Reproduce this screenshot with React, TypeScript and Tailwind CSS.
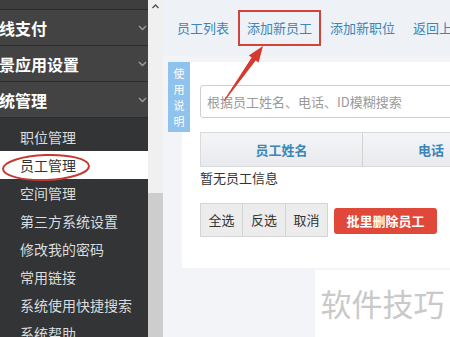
const TOP_MENU = ["线支付", "景应用设置", "统管理"];

const SUB_MENU = [
  "职位管理",
  "员工管理",
  "空间管理",
  "第三方系统设置",
  "修改我的密码",
  "常用链接",
  "系统使用快捷搜索",
  "系统帮助",
];

const TABS = ["员工列表", "添加新员工", "添加新职位", "返回上一页"];

const FONT = "font-['Microsoft_YaHei','Noto_Sans_CJK_SC',sans-serif]";

function Chevron() {
  return (
    <svg width="9" height="6" viewBox="0 0 9 6" className="shrink-0">
      <path d="M1 1 L4.5 4.5 L8 1" fill="none" stroke="#9a9a9a" strokeWidth="1.5" />
    </svg>
  );
}

function Sidebar() {
  return (
    <aside className="flex h-[337px] w-[148px] shrink-0 flex-col overflow-hidden bg-[#323436]">
      <div className="h-[10px] shrink-0 border-b border-[#2c2c2c] bg-[#3e3e3e]" />
      {TOP_MENU.map((label) => (
        <div
          key={label}
          className="flex h-[36px] shrink-0 items-center justify-between border-b border-[#2c2c2c] bg-[#434343] pr-[1px]"
        >
          <span className="-ml-[1px] text-[16px] font-bold leading-none text-white">
            {label}
          </span>
          <Chevron />
        </div>
      ))}
      <div className="flex shrink-0 flex-col pt-[5px]">
        {SUB_MENU.map((label) => {
          const active = label === "员工管理";
          return (
            <div
              key={label}
              className={
                active
                  ? "flex h-[28px] shrink-0 items-center bg-white pl-[20px] text-[14px] text-[#333]"
                  : "flex h-[28px] shrink-0 items-center pl-[20px] text-[14px] text-[#dcdcdc]"
              }
            >
              {label}
            </div>
          );
        })}
      </div>
    </aside>
  );
}

function Scrollbar() {
  return (
    <div className="flex w-[15px] shrink-0 flex-col bg-[#f0f0f0]">
      <div className="flex h-[12px] shrink-0 items-center justify-center">
        <svg width="7" height="5" viewBox="0 0 7 5">
          <path d="M0.5 4 L3.5 1 L6.5 4" fill="none" stroke="#505050" strokeWidth="1.4" />
        </svg>
      </div>
      <div className="flex-1" />
      <div className="h-[144px] shrink-0 bg-[#cdcdcd]" />
    </div>
  );
}

function Content() {
  return (
    <main className="relative flex min-w-0 flex-1 flex-col bg-[#f2f4f7]">
      {/* tabs */}
      <nav className="flex h-[56px] shrink-0 items-start overflow-hidden bg-[#eef1f5] pl-[5px] pt-[10px]">
        {TABS.map((tab) => (
          <span
            key={tab}
            className={
              tab === "添加新员工"
                ? "flex h-[36px] shrink-0 items-center whitespace-nowrap border-2 border-[#d0453b] px-[7px] text-[13px] text-[#3b86b8]"
                : "flex h-[36px] shrink-0 items-center whitespace-nowrap px-[9px] text-[13px] text-[#3b86b8]"
            }
          >
            {tab}
          </span>
        ))}
      </nav>

      {/* panel */}
      <div className="relative ml-[19px] mt-[6px] h-[206px] shrink-0 bg-white pl-[18px] pt-[23px]">
        <div className="absolute -left-[14px] top-0 flex w-[22px] flex-col items-center bg-[#8fc2ec] py-[3px] text-[11px] leading-[16px] text-white">
          <span>使</span>
          <span>用</span>
          <span>说</span>
          <span>明</span>
        </div>

        <div className="flex h-[33px] w-[300px] items-center rounded-[3px] border border-[#cfcfcf] px-[6px] text-[13px] text-[#9a9a9a]">
          根据员工姓名、电话、ID模糊搜索
        </div>

        <div className="mt-[14px] flex h-[35px] w-[300px] border border-[#dadada] bg-gradient-to-b from-[#f4f5f7] to-[#e8eaed] text-[13px] font-bold text-[#3b86b8]">
          <div className="flex w-[163px] items-center justify-center border-r border-[#d2d2d2]">
            员工姓名
          </div>
          <div className="flex w-[137px] items-center justify-center">电话</div>
        </div>

        <p className="mt-[2px] text-[13px] leading-[18px] text-[#333]">暂无员工信息</p>

        <div className="mt-[16px] flex items-start">
          <button className="h-[34px] w-[43px] border border-[#d4d4d4] bg-[#ececec] text-[13px] text-[#333]">
            全选
          </button>
          <button className="h-[34px] w-[43px] border border-l-0 border-[#d4d4d4] bg-[#ececec] text-[13px] text-[#333]">
            反选
          </button>
          <button className="h-[34px] w-[42px] border border-l-0 border-[#d4d4d4] bg-[#ececec] text-[13px] text-[#333]">
            取消
          </button>
          <button className="ml-[6px] mt-[5px] h-[26px] w-[103px] rounded-[3px] bg-[#e0483a] text-[13px] font-bold text-white">
            批里删除员工
          </button>
        </div>
      </div>

      {/* watermark */}
      <div className="mt-[2px] flex flex-1 justify-end">
        <div className="flex w-[135px] items-center justify-center bg-white pb-[2px] text-[31px] leading-none text-[#c9c9c9]">
          软件技巧
        </div>
      </div>
    </main>
  );
}

export default function App() {
  return (
    <div className={`relative flex h-[337px] w-[450px] overflow-hidden ${FONT}`}>
      <Sidebar />
      <Scrollbar />
      <Content />

      {/* annotations */}
      <svg
        className="pointer-events-none absolute left-0 top-0"
        width="450"
        height="337"
        viewBox="0 0 450 337"
      >
        <ellipse
          cx="46"
          cy="167.5"
          rx="43"
          ry="12.5"
          fill="none"
          stroke="#c43a32"
          strokeWidth="2"
          transform="rotate(-2 46 167.5)"
        />
        <polygon
          points="224.4,101.3 223.6,100.7 251.7,57.5 248.8,55.5 263,46 258.6,62.5 255.7,60.5"
          fill="#d63a2f"
        />
      </svg>
    </div>
  );
}
